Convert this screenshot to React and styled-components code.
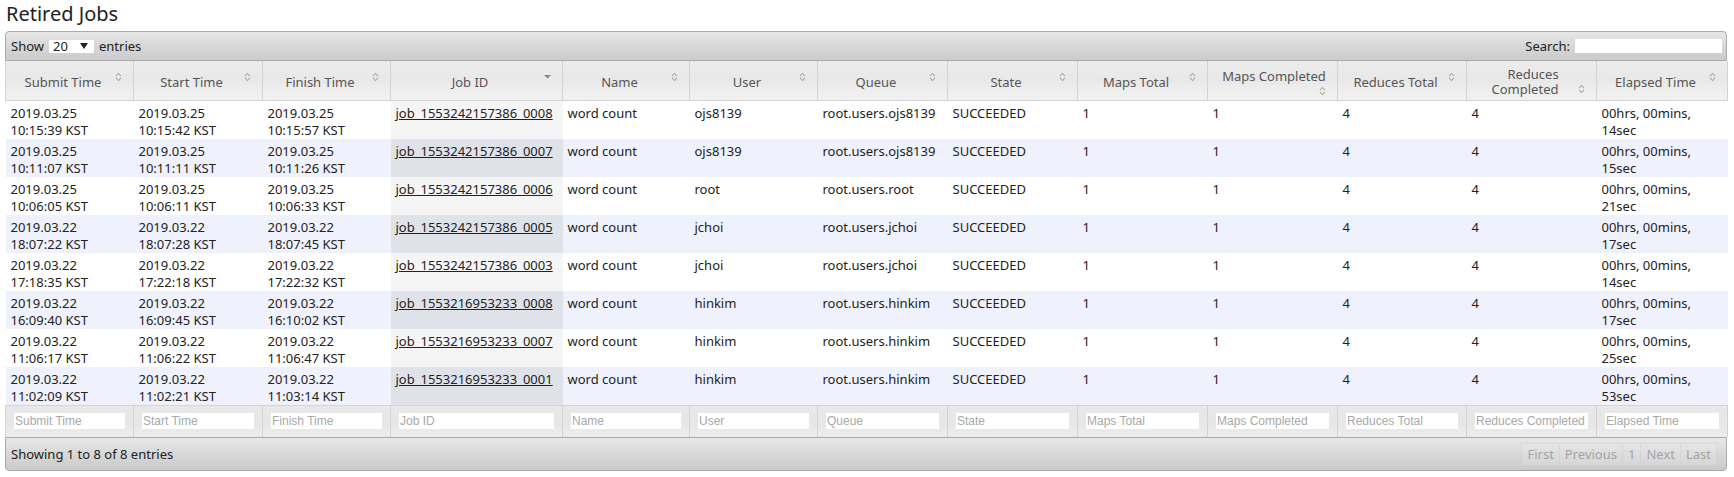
import React from 'react';
import styled, { createGlobalStyle } from 'styled-components';

const GlobalStyle = createGlobalStyle`
  body {
    margin: 0;
    background: #fff;
    font-family: "Noto Sans", sans-serif;
    color: #222;
  }
`

const Page = styled.div`
  width: 1722px;
  padding: 0 7px 0 5px;
`
const Title = styled.h3`
  margin: 0 0 4px 1px;
  font-size: 20px;
  font-weight: normal;
  line-height: 27px;
  color: #222;
`
const Toolbar = styled.div`
  display: flex;
  align-items: center;
  justify-content: space-between;
  height: ${p => (p.$bottom ? 32 : 28)}px;
  padding: 0 ${p => (p.$bottom ? 9 : 4)}px 0 5px;
  border: 1px solid #aaa;
  border-radius: ${p => (p.$bottom ? '0 0 4px 4px' : '4px 4px 0 0')};
  background: linear-gradient(to bottom, #e7e7e7 0%, #d6d6d6 55%, #cbcbcb 100%);
  font-size: 13px;
  color: #222;
`
const Group = styled.div`
  display: flex;
  align-items: center;
  gap: 5px;
`
const Select = styled.div`
  display: flex;
  align-items: center;
  justify-content: space-between;
  width: 45px;
  height: 13px;
  padding: 0 6px 0 4px;
  box-sizing: border-box;
  background: #fff;
  font-size: 13px;
  line-height: 13px;
`
const SearchBox = styled.input`
  width: 147px;
  height: 14px;
  padding: 0;
  border: none;
  background: #fff;
  outline: none;
`
const Table = styled.table`
  width: 1722px;
  table-layout: fixed;
  border-collapse: collapse;
  font-size: 13px;
`
const HeadCell = styled.th`
  height: 39px;
  box-sizing: border-box;
  padding: 4px 7px 0 10px;
  border: 1px solid #d3d3d3;
  border-top: none;
  background: linear-gradient(to bottom, #ececec 0%, #e8e8e8 50%, #ededed 70%, #f1f1f1 100%);
  color: #555;
  font-weight: normal;
  line-height: 15.5px;
  text-align: center;
  vertical-align: middle;
`
const SortIcon = styled.span`
  float: right;
  width: 16px;
  height: 10px;
  margin-top: ${p => (p.$low ? 2 : -3)}px;
  display: flex;
  justify-content: center;
`
const Row = styled.tr`
  background: ${p => (p.$even ? '#eff2fc' : '#fff')};
`
const Cell = styled.td`
  padding: 4px 5px 0;
  line-height: 17px;
  vertical-align: top;
  color: #222;
  background: ${p => (p.$sorted ? (p.$even ? '#e0e2ea' : '#f5f5f5') : 'transparent')};
  word-wrap: break-word;
`
const JobLink = styled.a`
  color: #222;
  text-decoration: underline;
`
const FootCell = styled.th`
  height: 32px;
  box-sizing: border-box;
  padding: 0 8px;
  border: 1px solid #d3d3d3;
  border-bottom: none;
  background: linear-gradient(to bottom, #e9e9e9 0%, #e6e6e6 50%, #ececec 100%);
  font-weight: normal;
  vertical-align: middle;
`
const FilterInput = styled.input`
  display: block;
  width: 100%;
  height: 16px;
  padding: 0 1px;
  box-sizing: border-box;
  border: none;
  outline: none;
  background: #fff;
  font-family: "Liberation Sans", Arial, sans-serif;
  font-size: 12px;
  &::placeholder {
    color: #a9a9a9;
  }
`
const Pager = styled.div`
  display: flex;
  opacity: 0.4;
`
const PageButton = styled.span`
  padding: 1px 5px 2px;
  border: 1px solid #d3d3d3;
  margin-left: -1px;
  background: linear-gradient(to bottom, #ececec, #e2e2e2);
  color: #555;
  font-size: 13px;
  line-height: 18px;
`

const columns = [
  ['Submit Time', 128],
  ['Start Time', 129],
  ['Finish Time', 128],
  ['Job ID', 172],
  ['Name', 127],
  ['User', 128],
  ['Queue', 130],
  ['State', 130],
  ['Maps Total', 130],
  ['Maps Completed', 130],
  ['Reduces Total', 129],
  ['Reduces Completed', 130],
  ['Elapsed Time', 131],
]

const jobs = [
  ['2019.03.25', '10:15:39', '10:15:42', '10:15:57', 'job_1553242157386_0008', 'ojs8139', '14sec'],
  ['2019.03.25', '10:11:07', '10:11:11', '10:11:26', 'job_1553242157386_0007', 'ojs8139', '15sec'],
  ['2019.03.25', '10:06:05', '10:06:11', '10:06:33', 'job_1553242157386_0006', 'root', '21sec'],
  ['2019.03.22', '18:07:22', '18:07:28', '18:07:45', 'job_1553242157386_0005', 'jchoi', '17sec'],
  ['2019.03.22', '17:18:35', '17:22:18', '17:22:32', 'job_1553242157386_0003', 'jchoi', '14sec'],
  ['2019.03.22', '16:09:40', '16:09:45', '16:10:02', 'job_1553216953233_0008', 'hinkim', '17sec'],
  ['2019.03.22', '11:06:17', '11:06:22', '11:06:47', 'job_1553216953233_0007', 'hinkim', '25sec'],
  ['2019.03.22', '11:02:09', '11:02:21', '11:03:14', 'job_1553216953233_0001', 'hinkim', '53sec'],
]

const Carets = () => (
  <svg width="7" height="10" viewBox="0 0 7 10">
    <path d="M1 4.2 L3.5 1.5 L6 4.2 M1 5.8 L3.5 8.5 L6 5.8" fill="none" stroke="#a8a8a8" strokeWidth="1.1" />
  </svg>
)

const SortedDown = () => (
  <svg width="7" height="10" viewBox="0 0 7 10">
    <path d="M0 3 L7 3 L3.5 6.5 Z" fill="#888" />
  </svg>
)

const App = () => {
  return (
    <Page>
      <GlobalStyle />
      <Title>Retired Jobs</Title>
      <Toolbar>
        <Group>
          Show
          <Select>
            20
            <svg width="8" height="6" viewBox="0 0 8 6"><path d="M0 0 L8 0 L4 6 Z" fill="#222" /></svg>
          </Select>
          entries
        </Group>
        <Group>
          Search:
          <SearchBox type="text" />
        </Group>
      </Toolbar>
      <Table>
        <colgroup>
          {columns.map(([name, w]) => <col key={name} style={{ width: w }} />)}
        </colgroup>
        <thead>
          <tr>
            {columns.map(([name]) => (
              <HeadCell key={name}>
                {name}
                <SortIcon $low={name === 'Maps Completed' || name === 'Reduces Completed'}>
                  {name === 'Job ID' ? <SortedDown /> : <Carets />}
                </SortIcon>
              </HeadCell>
            ))}
          </tr>
        </thead>
        <tbody>
          {jobs.map(([day, submit, start, finish, id, user, secs], i) => {
            const even = i % 2 === 1;
            return (
              <Row key={id} $even={even}>
                <Cell>{day} {submit} KST</Cell>
                <Cell>{day} {start} KST</Cell>
                <Cell>{day} {finish} KST</Cell>
                <Cell $sorted $even={even}><JobLink href="#">{id}</JobLink></Cell>
                <Cell>word count</Cell>
                <Cell>{user}</Cell>
                <Cell>root.users.{user}</Cell>
                <Cell>SUCCEEDED</Cell>
                <Cell>1</Cell>
                <Cell>1</Cell>
                <Cell>4</Cell>
                <Cell>4</Cell>
                <Cell>00hrs, 00mins, {secs}</Cell>
              </Row>
            );
          })}
        </tbody>
        <tfoot>
          <tr>
            {columns.map(([name]) => (
              <FootCell key={name}>
                <FilterInput type="text" placeholder={name} />
              </FootCell>
            ))}
          </tr>
        </tfoot>
      </Table>
      <Toolbar $bottom>
        <span>Showing 1 to 8 of 8 entries</span>
        <Pager>
          <PageButton>First</PageButton>
          <PageButton>Previous</PageButton>
          <PageButton>1</PageButton>
          <PageButton>Next</PageButton>
          <PageButton>Last</PageButton>
        </Pager>
      </Toolbar>
    </Page>
  );
}

export default App;
